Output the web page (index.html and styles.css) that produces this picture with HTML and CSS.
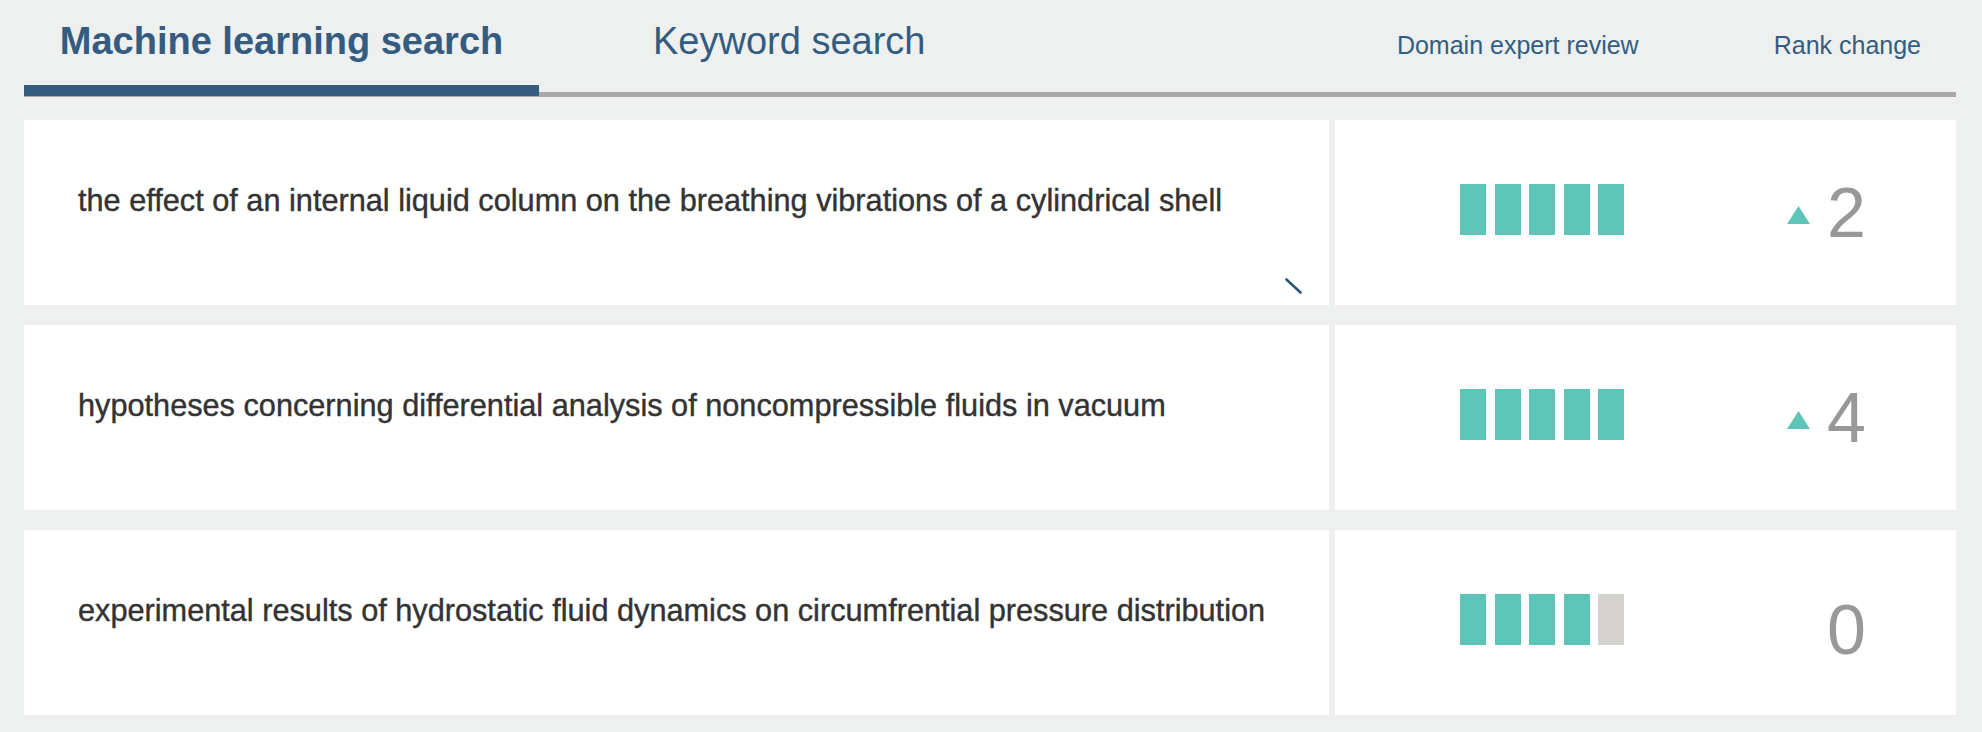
FILE: index.html
```html
<!DOCTYPE html>
<html lang="en">
<head>
<meta charset="utf-8">
<title>Search comparison</title>
<link rel="stylesheet" href="styles.css">
</head>
<body>
<div class="page">
  <header class="header">
    <div class="tab tab--active">Machine learning search</div>
    <div class="tab tab--plain">Keyword search</div>
    <div class="cols">
      <span class="col-label">Domain expert review</span>
      <span class="col-label">Rank change</span>
    </div>
  </header>

  <main class="list">
    <div class="row">
      <div class="doc">
        <p class="doc-title">the effect of an internal liquid column on the breathing vibrations of a cylindrical shell</p>
        <svg class="resize" width="17" height="16" viewBox="0 0 17 16"><line x1="1.5" y1="1.5" x2="15.5" y2="14.5" stroke="#2f5577" stroke-width="2.6" stroke-linecap="round"/></svg>
      </div>
      <div class="meta">
        <div class="bars">
          <span class="bar"></span><span class="bar"></span><span class="bar"></span><span class="bar"></span><span class="bar"></span>
        </div>
        <div class="rank">
          <svg class="tri" width="23" height="18" viewBox="0 0 23 18"><polygon points="11.5,0 23,18 0,18" fill="#5fc4b8"/></svg>
          <span class="rank-num">2</span>
        </div>
      </div>
    </div>

    <div class="row">
      <div class="doc">
        <p class="doc-title">hypotheses concerning differential analysis of noncompressible fluids in vacuum</p>
      </div>
      <div class="meta">
        <div class="bars">
          <span class="bar"></span><span class="bar"></span><span class="bar"></span><span class="bar"></span><span class="bar"></span>
        </div>
        <div class="rank">
          <svg class="tri" width="23" height="18" viewBox="0 0 23 18"><polygon points="11.5,0 23,18 0,18" fill="#5fc4b8"/></svg>
          <span class="rank-num">4</span>
        </div>
      </div>
    </div>

    <div class="row">
      <div class="doc">
        <p class="doc-title">experimental results of hydrostatic fluid dynamics on circumfrential pressure distribution</p>
      </div>
      <div class="meta">
        <div class="bars">
          <span class="bar"></span><span class="bar"></span><span class="bar"></span><span class="bar"></span><span class="bar bar--off"></span>
        </div>
        <div class="rank rank--flat">
          <span class="tri-space"></span>
          <span class="rank-num">0</span>
        </div>
      </div>
    </div>
  </main>
</div>
</body>
</html>
```

FILE: styles.css
```css
* { box-sizing: border-box; }

html, body {
  margin: 0;
  padding: 0;
  background: #eef0ef;
}

body {
  font-family: "Liberation Sans", Arial, Helvetica, sans-serif;
}

.page {
  padding: 0 26px 0 24px;
}

/* ---------- header / tabs ---------- */
.header {
  display: flex;
  align-items: flex-end;
  border-bottom: 5px solid #aaa9a7;
}

.tab {
  font-size: 38px;
  line-height: 38px;
  color: #335c80;
  white-space: nowrap;
}

.tab--active {
  width: 515px;
  text-align: center;
  font-weight: bold;
  padding: 22px 0 25px;
  border-bottom: 11px solid #335c80;
  margin-bottom: -4px;
}

.tab--plain {
  padding: 22px 0 32px 114px;
}

.cols {
  margin-left: auto;
  display: flex;
  gap: 135px;
  padding: 0 35px 34px 0;
}

.col-label {
  font-size: 25px;
  line-height: 25px;
  color: #335c80;
  white-space: nowrap;
}

/* ---------- rows ---------- */
.list {
  display: flex;
  flex-direction: column;
  gap: 20px;
  padding-top: 23px;
}

.row {
  display: grid;
  grid-template-columns: 1fr 621px;
  gap: 6px;
  height: 185px;
}

.doc {
  position: relative;
  background: #fff;
  padding: 66px 40px 0 54px;
}

.doc-title {
  margin: 0;
  font-size: 30.7px;
  line-height: 30px;
  color: #333;
  white-space: nowrap;
  -webkit-text-stroke: 0.4px #333;
}

.resize {
  position: absolute;
  right: 27px;
  bottom: 11px;
}

.meta {
  background: #fff;
  display: flex;
  align-items: flex-start;
  padding: 58px 0 0 125px;
}

.bars {
  display: flex;
  gap: 8.5px;
  margin-top: 6px;
}

.bar {
  display: block;
  width: 26px;
  height: 51px;
  background: #5fc4b8;
}

.bar--off {
  background: #d3d2cf;
}

.rank {
  display: flex;
  align-items: center;
  gap: 17px;
  margin-left: 163px;
}

.tri {
  display: block;
  margin-top: 4px;
}

.tri-space {
  display: block;
  width: 23px;
  height: 18px;
}

.rank-num {
  font-size: 70px;
  line-height: 70px;
  color: #999896;
}

.rank--flat .rank-num {
  padding-top: 7px;
}
```
